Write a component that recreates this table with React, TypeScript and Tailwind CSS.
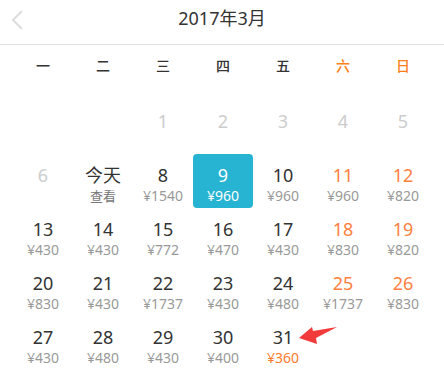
import React from "react";

type Day = { d: string; p?: string; kind?: "past" | "wkend" | "today" | "sel" | "cheap" };

const rows: (Day | null)[][] = [
  [null, null, { d: "1", kind: "past" }, { d: "2", kind: "past" }, { d: "3", kind: "past" }, { d: "4", kind: "past" }, { d: "5", kind: "past" }],
  [
    { d: "6", kind: "past" },
    { d: "今天", p: "查看", kind: "today" },
    { d: "8", p: "¥1540" },
    { d: "9", p: "¥960", kind: "sel" },
    { d: "10", p: "¥960" },
    { d: "11", p: "¥960", kind: "wkend" },
    { d: "12", p: "¥820", kind: "wkend" },
  ],
  [
    { d: "13", p: "¥430" },
    { d: "14", p: "¥430" },
    { d: "15", p: "¥772" },
    { d: "16", p: "¥470" },
    { d: "17", p: "¥430" },
    { d: "18", p: "¥830", kind: "wkend" },
    { d: "19", p: "¥820", kind: "wkend" },
  ],
  [
    { d: "20", p: "¥830" },
    { d: "21", p: "¥430" },
    { d: "22", p: "¥1737" },
    { d: "23", p: "¥430" },
    { d: "24", p: "¥480" },
    { d: "25", p: "¥1737", kind: "wkend" },
    { d: "26", p: "¥830", kind: "wkend" },
  ],
  [
    { d: "27", p: "¥430" },
    { d: "28", p: "¥480" },
    { d: "29", p: "¥430" },
    { d: "30", p: "¥400" },
    { d: "31", p: "¥360", kind: "cheap" },
    null,
    null,
  ],
];

const weekdays = ["一", "二", "三", "四", "五", "六", "日"];

function Cell({ day }: { day: Day | null }) {
  if (!day) return <div className="h-[54px]" />;
  const k = day.kind;
  const numColor =
    k === "past" ? "text-[#cccccc]" : k === "wkend" ? "text-[#ff7f3f]" : k === "sel" ? "text-white" : "text-[#333333]";
  const priceColor =
    k === "sel" ? "text-white" : k === "cheap" ? "text-[#ff7a2a]" : k === "today" ? "text-[#777777]" : "text-[#999999]";
  return (
    <div
      className={`h-[54px] flex flex-col items-center pt-[10px] ${k === "sel" ? "bg-[#27b4d2] rounded-[4px]" : ""}`}
    >
      <div className={`text-[18px] leading-[22px] ${numColor}`}>{day.d}</div>
      {day.p && (
        <div className={`${k === "today" ? "text-[13px]" : "text-[14px]"} leading-[18px] mt-[1px] ${priceColor}`}>
          {day.p}
        </div>
      )}
    </div>
  );
}

export default function App() {
  return (
    <div
      className="relative w-[444px] h-[388px] bg-white overflow-hidden"
      style={{ fontFamily: '"Noto Sans", "Noto Sans CJK SC", sans-serif' }}
    >
      <div className="relative h-[45px] border-b border-[#e2e2e2] flex justify-center pt-[6px]">
        <svg className="absolute left-[11px] top-[10px]" width="14" height="20" viewBox="0 0 14 20">
          <polyline points="11,1 2,10 11,19" fill="none" stroke="#dddddd" strokeWidth="2" />
        </svg>
        <div className="text-[18px] leading-[24px] text-[#333333]">2017年3月</div>
      </div>
      <div className="grid grid-cols-7 pl-[13px] pr-[11px] h-[40px] items-center">
        {weekdays.map((w, i) => (
          <div
            key={w}
            className={`text-center text-[14px] font-medium ${i >= 5 ? "text-[#ff7e1a]" : "text-[#333333]"}`}
          >
            {w}
          </div>
        ))}
      </div>
      <div className="grid grid-cols-7 pl-[13px] pr-[11px] mt-[15px]">
        {rows.flat().map((d, i) => (
          <Cell key={i} day={d} />
        ))}
      </div>
      <svg className="absolute left-[296px] top-[324px]" width="44" height="24" viewBox="0 0 44 24">
        <polygon points="3,14 16,3 17,7 41,3 20,14 21,20" fill="#f23a3a" />
      </svg>
    </div>
  );
}
